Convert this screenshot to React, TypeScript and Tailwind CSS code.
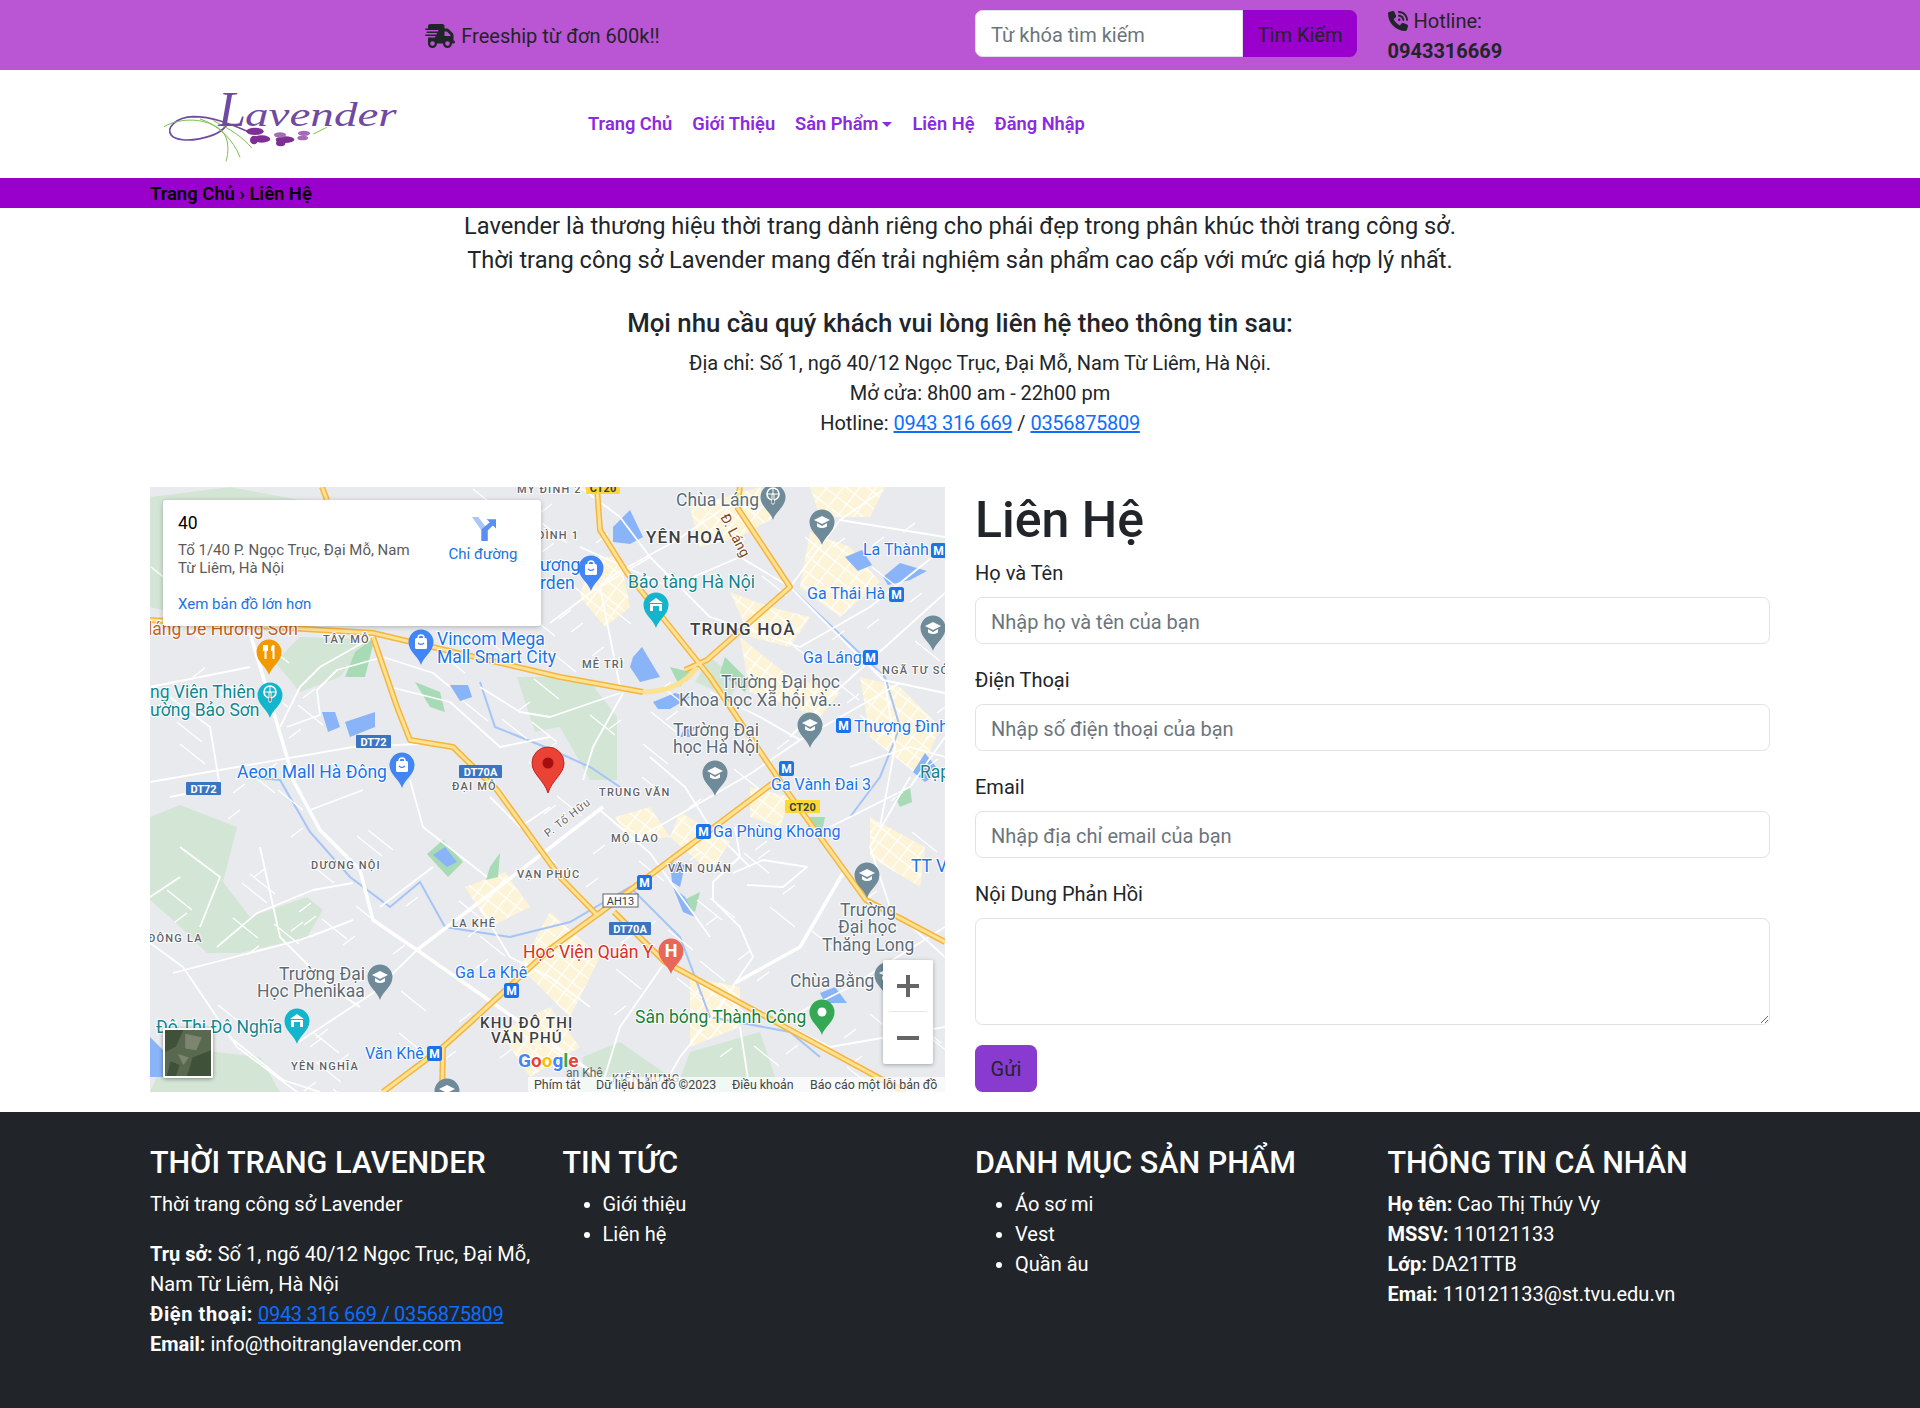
import { FaPhoneVolume, FaTruckFast } from "react-icons/fa6";

const minor = [
  "100,146 137,270 143,293 170,343 210,383 223,433 267,463 343,516 420,570 470,605",
  "137,240 170,228 167,203 187,183 233,170 283,186 300,200",
  "100,180 0,200",
  "0,295 203,260 290,256",
  "160,323 213,303",
  "260,293 273,340 337,390",
  "230,420 283,380",
  "267,463 410,353 453,320",
  "0,410 30,390",
  "160,450 203,433",
  "67,460 107,426 163,403 203,396",
  "0,456 33,480 87,560 147,605",
  "23,486 150,453 203,433",
  "147,556 223,506 267,463",
  "80,550 133,593 170,605",
  "585,496 650,460 693,386",
  "563,413 590,440 603,470 585,496 570,520 530,570 510,605",
  "563,413 563,395 590,370 585,340",
  "597,398 633,400 657,380 613,373 583,386",
  "450,323 500,366 560,450",
  "400,136 467,86 527,53 590,10",
  "640,100 690,33 733,3",
  "640,100 733,193 795,206",
  "750,196 650,253 600,287 520,333 480,355",
  "795,106 683,207 640,250",
  "473,206 443,260 433,293",
  "430,0 470,30 500,70 560,130",
  "500,70 450,100 470,200",
  "560,130 650,160 720,120 795,60",
  "690,33 795,50",
  "760,290 720,360 740,420 795,470",
  "680,340 760,300 795,250",
  "640,530 700,500 795,440",
  "515,475 470,540 450,605",
  "600,520 680,560 795,540",
  "330,200 370,225 400,230 470,206",
  "20,210 60,240 70,300 20,310",
  "240,200 300,215 350,260 400,250",
  "340,310 370,340 400,320",
  "110,360 130,450 180,500 210,520",
  "30,360 70,390 50,440",
  "330,420 360,470 400,490 440,520",
  "223,150 170,180 150,200 130,240",
  "560,205 610,230 650,253",
  "500,270 535,300 560,340 600,380",
  "430,60 520,100 590,70 640,100",
  "700,280 760,260 795,270",
  "735,195 745,260 730,340",
  "590,540 600,605",
];

// short side streets, scattered with a fixed seed so the picture never changes
const sideStreets = Array.from({ length: 170 }, (_, i) => {
  const x = (i * 137 + (i * i * 11) % 97) % 795;
  const y = (i * 211 + (i * i * 7) % 89) % 605;
  const len = 12 + (i * 13) % 26;
  const up = i % 2 === 0 ? -0.75 : 0.8;
  return { x, y, x2: x + len, y2: y + len * up };
});

const greens = [
  "0,330 30,318 87,340 73,395 100,430 157,410 173,423 157,450 90,466 57,466 23,433 0,413",
  "0,10 80,0 160,15 180,60 120,110 40,130 0,120",
  "400,193 440,195 467,230 467,293 440,293 410,240",
  "125,175 150,150 220,152 190,190 150,205",
  "367,190 410,190 410,240 385,245",
  "433,570 470,555 520,590 510,605 430,605",
  "540,565 610,545 630,605 525,605",
  "20,560 110,570 130,605 0,605",
  "560,170 590,195 580,210 545,195",
];

const parks = [
  "277,367 293,353 313,375 298,390",
  "340,380 350,366 348,390 336,393",
  "205,165 225,150 215,190 195,190",
  "265,195 290,205 295,225 280,220",
  "570,186 575,170 600,195 595,205",
  "530,415 550,405 545,425 532,420",
  "745,310 760,300 762,315 750,320",
  "660,330 675,330 672,345 658,340",
  "520,180 540,185 530,200",
];

const waters = [
  "463,40 480,23 493,50 480,57 463,55",
  "733,90 750,76 777,84 760,93 738,98",
  "695,70 712,63 722,78 708,84",
  "483,170 492,160 510,190 490,195 480,180",
  "503,215 525,206 540,210 520,222 508,222",
  "535,240 545,240 540,250 530,250",
  "763,285 775,266 790,285 775,295",
  "523,400 535,410 545,430 533,425",
  "520,375 535,378 530,400 522,395",
  "172,225 185,225 190,240 178,245",
  "195,235 225,225 225,240 200,250",
  "300,198 318,198 322,210 310,214",
  "0,550 15,565 20,590 0,590",
  "283,368 295,360 307,375 297,380",
  "670,506 685,500 697,516 675,516",
];

const city = [
  "540,20 610,0 625,30 590,50 550,60",
  "660,45 700,60 730,95 690,130 650,100",
  "580,105 620,120 660,130 640,160 600,150",
  "440,70 470,70 480,120 455,140 430,110",
  "590,150 640,190 690,205 670,230 600,205",
  "710,190 750,200 790,240 770,290 720,250",
  "660,0 735,0 720,30 670,30",
  "530,325 580,355 560,385 520,350",
  "400,425 450,470 420,530 370,480",
  "350,545 400,520 430,560 380,590",
  "540,490 590,500 590,540 540,560",
  "315,400 355,385 380,420 340,440",
  "600,300 640,310 630,340 600,330",
  "720,330 775,360 770,400 720,370",
  "465,330 500,320 520,350 480,355",
];

const highways = [
  "0,133 223,146 410,190 493,205",
  "172,0 177,13",
  "447,0 450,43 477,86 560,190 636,303 716,413 795,455",
  "587,20 640,100 557,173 535,183",
  "623,296 451,425 400,462 323,533 293,560 233,605",
  "223,150 247,220 260,253 303,260 347,303 410,390 447,428",
  "464,425 515,475 755,605",
  "293,560 292,605",
  "590,0 587,20",
];

type Label = [string, number, number, string, number?];

const labels: Label[] = [
  ["láng De Hương Sơn", -2, 148, "#c5611a"],
  ["Vincom Mega", 287, 158, "#1a73e8"],
  ["Mall Smart City", 287, 176, "#1a73e8"],
  ["ng Viên Thiên", 0, 211, "#12858f"],
  ["ường Bảo Sơn", 0, 229, "#12858f"],
  ["Aeon Mall Hà Đông", 87, 291, "#1a73e8"],
  ["Chùa Láng", 526, 19, "#5b6b78"],
  ["Bảo tàng Hà Nội", 478, 101, "#12858f"],
  ["ương", 390, 84, "#1a73e8"],
  ["rden", 390, 102, "#1a73e8"],
  ["La Thành", 713, 68, "#1a73e8", 16],
  ["Ga Thái Hà", 657, 112, "#1a73e8", 16],
  ["Ga Láng", 653, 176, "#1a73e8", 16],
  ["Trường Đại học", 571, 201, "#5b6b78"],
  ["Khoa học Xã hội và...", 529, 219, "#5b6b78"],
  ["Thượng Đình", 704, 245, "#1a73e8", 16.5],
  ["Trường Đại", 523, 249, "#5b6b78"],
  ["học Hà Nội", 523, 266, "#5b6b78"],
  ["Ga Vành Đai 3", 621, 303, "#1a73e8", 16],
  ["Rạp", 770, 291, "#12858f"],
  ["Ga Phùng Khoang", 563, 350, "#1a73e8", 16],
  ["Học Viện Quân Y", 373, 471, "#d93025"],
  ["Ga La Khê", 305, 491, "#1a73e8", 16],
  ["Trường Đại", 129, 493, "#5b6b78"],
  ["Học Phenikaa", 107, 510, "#5b6b78"],
  ["Đô Thị Đô Nghĩa", 6, 546, "#12858f"],
  ["Văn Khê", 215, 572, "#1a73e8", 16],
  ["Sân bóng Thành Công", 485, 536, "#188038"],
  ["Chùa Bằng", 640, 500, "#5b6b78"],
  ["Trường", 690, 429, "#5b6b78"],
  ["Đại học", 688, 446, "#5b6b78"],
  ["Thăng Long", 672, 464, "#5b6b78"],
  ["TT V", 761, 385, "#1a73e8"],
];

const areas: Label[] = [
  ["TÂY MỖ", 173, 156, "#5f6368", 11],
  ["ĐẠI MỖ", 302, 303, "#5f6368", 11],
  ["MỸ ĐÌNH 2", 367, 6, "#5f6368", 11],
  ["ĐÌNH 1", 387, 52, "#5f6368", 11],
  ["YÊN HOÀ", 496, 56, "#3c4043", 17],
  ["TRUNG HOÀ", 540, 148, "#3c4043", 17],
  ["NGÃ TƯ SỞ", 732, 187, "#5f6368", 11],
  ["MỄ TRÌ", 432, 181, "#5f6368", 11],
  ["TRUNG VĂN", 449, 309, "#5f6368", 11],
  ["MỘ LAO", 461, 355, "#5f6368", 11],
  ["VĂN QUÁN", 518, 385, "#5f6368", 11],
  ["VẠN PHÚC", 367, 391, "#5f6368", 11],
  ["LA KHÊ", 302, 440, "#5f6368", 11],
  ["DƯƠNG NỘI", 161, 382, "#5f6368", 11],
  ["ĐÔNG LA", -2, 455, "#5f6368", 11],
  ["YÊN NGHĨA", 141, 583, "#5f6368", 11],
  ["KHU ĐÔ THỊ", 330, 541, "#3c4043", 15],
  ["VĂN PHÚ", 341, 556, "#3c4043", 15],
  ["KIẾN HƯNG", 462, 595, "#5f6368", 11],
];

const pins: [number, number, string, string][] = [
  [441, 81, "#4285f4", "bag"],
  [271, 155, "#4285f4", "bag"],
  [252, 278, "#4285f4", "bag"],
  [119, 165, "#f29900", "food"],
  [120, 208, "#12b5cb", "tree"],
  [506, 118, "#12b5cb", "museum"],
  [147, 534, "#12b5cb", "museum"],
  [623, 10, "#6f8a99", "tree"],
  [672, 35, "#6f8a99", "cap"],
  [783, 141, "#6f8a99", "cap"],
  [660, 238, "#6f8a99", "cap"],
  [565, 286, "#6f8a99", "cap"],
  [717, 388, "#6f8a99", "cap"],
  [230, 490, "#6f8a99", "cap"],
  [297, 604, "#6f8a99", "cap"],
  [737, 488, "#6f8a99", "cap"],
  [521, 464, "#e8665a", "h"],
  [672, 525, "#34a853", "dot"],
];

const metro: [number, number][] = [
  [781, 56], [739, 100], [713, 163], [686, 231], [629, 274], [546, 337], [487, 388], [354, 496], [277, 559],
];

const badges: [string, number, number, number, string, string][] = [
  ["DT72", 206, 248, 35, "#3a75c4", "#fff"],
  ["DT70A", 309, 278, 43, "#3a75c4", "#fff"],
  ["DT72", 36, 295, 35, "#3a75c4", "#fff"],
  ["CT20", 635, 313, 35, "#fdd835", "#3c4043"],
  ["CT20", 436, -6, 34, "#fdd835", "#3c4043"],
  ["DT70A", 459, 435, 42, "#3a75c4", "#fff"],
];

const Pin = ({ x, y, fill, kind }: { x: number; y: number; fill: string; kind: string }) => (
  <g transform={`translate(${x} ${y})`}>
    <path d="M0 23C-2 15-12.5 10-12.5 0a12.5 12.5 0 0 1 25 0C12.5 10 2 15 0 23z" fill={fill} />
    {kind === "cap" && (
      <>
        <path d="M-8-2 0-6 8-2 0 2z" fill="#fff" />
        <path d="M-5 1v3.500q5 3 10 0V1L0 4z" fill="#fff" />
      </>
    )}
    {kind === "bag" && (
      <>
        <rect x="-6" y="-4" width="12" height="11" rx="1.500" fill="#fff" />
        <path d="M-3-4a3 3 0 0 1 6 0" fill="none" stroke="#fff" strokeWidth="1.500" />
        <path d="M-3 1q3 3 6 0" fill="none" stroke={fill} strokeWidth="1.200" />
      </>
    )}
    {kind === "food" && (
      <path d="M-6-7v6h1.500V7h2V-1H-1V-7M4-7C2-7 2-3 2-1h1.500V7h2V-7z" fill="#fff" />
    )}
    {kind === "tree" && (
      <>
        <circle cy="-3" r="6" fill="none" stroke="#fff" strokeWidth="1.600" />
        <path d="M-1-3H1V7H-1zM-6-3H6M0-9V3" stroke="#fff" strokeWidth="1" />
      </>
    )}
    {kind === "museum" && <path d="M-7-2 0-7 7-2zM-6-1H6V6H-6z" fill="#fff" />}
    {kind === "museum" && <rect x="-3" y="1" width="6" height="5" fill={fill} />}
    {kind === "h" && (
      <text textAnchor="middle" y="6" fontSize="18" fontWeight="700" fill="#fff">
        H
      </text>
    )}
    {kind === "dot" && <circle r="4.500" fill="#fff" />}
  </g>
);

const GoogleMap = () => (
  <div className="relative h-[605px] overflow-hidden bg-[#e8eaed]">
    <svg viewBox="0 0 795 605" className="block h-full w-full" style={{ fontFamily: "Roboto, sans-serif" }}>
      <defs>
        <pattern id="blocks" width="13" height="13" patternUnits="userSpaceOnUse" patternTransform="rotate(38)">
          <rect width="13" height="13" fill="#fdf3d6" />
          <path d="M0 0H13M0 0V13" stroke="#fff" strokeWidth="2.500" />
        </pattern>
      </defs>
      {greens.map((p) => (
        <polygon key={p} points={p} fill="#d3e6d6" />
      ))}
      {city.map((p) => (
        <polygon key={p} points={p} fill="url(#blocks)" />
      ))}
      {parks.map((p) => (
        <polygon key={p} points={p} fill="#a8dab5" />
      ))}
      {waters.map((p) => (
        <polygon key={p} points={p} fill="#8ab4f8" />
      ))}
      <polyline points="100,290 130,293 160,345 200,390 240,420 270,395 295,440 360,450 420,435 480,400 530,450 560,530 640,545 670,570" fill="none" stroke="#a5c4f7" strokeWidth="2" />
      <polyline points="640,100 735,190 750,240 730,290 700,330" fill="none" stroke="#a5c4f7" strokeWidth="2" />
      <polyline points="330,195 345,240 400,262 440,280 470,300" fill="none" stroke="#a5c4f7" strokeWidth="2" />
      {sideStreets.map((s) => (
        <line key={`${s.x}-${s.y}`} x1={s.x} y1={s.y} x2={s.x2} y2={s.y2} stroke="#fff" strokeWidth="1.200" />
      ))}
      {minor.map((p, i) => (
        <polyline key={p} points={p} fill="none" stroke="#fff" strokeWidth={i < 1 || i === 7 || i === 15 ? 3.500 : 1.800} strokeLinejoin="round" />
      ))}
      {highways.map((p) => (
        <polyline key={p} points={p} fill="none" stroke="#f5b53f" strokeWidth="6" strokeLinejoin="round" />
      ))}
      {highways.map((p) => (
        <polyline key={`${p}-in`} points={p} fill="none" stroke="#fde293" strokeWidth="3" strokeLinejoin="round" />
      ))}
      <path d="M493 205Q530 205 547 180" fill="none" stroke="#fde293" strokeWidth="5" />
      {labels.map(([t, x, y, c, s]) => (
        <text key={`${t}${x}`} x={x} y={y} fill={c} fontSize={s ?? 17.5} stroke="#fff" strokeWidth="2" paintOrder="stroke">
          {t}
        </text>
      ))}
      {areas.map(([t, x, y, c, s]) => (
        <text key={`${t}${x}`} x={x} y={y} fill={c} fontSize={s} fontWeight="500" letterSpacing="1.200" stroke="#fff" strokeWidth="2" paintOrder="stroke">
          {t}
        </text>
      ))}
      <text x="555" y="75" fill="#7b4a1e" fontSize="14" transform="rotate(62 600 65)" stroke="#fff" strokeWidth="2" paintOrder="stroke">
        Đ. Láng
      </text>
      <text x="395" y="348" fill="#5f6368" fontSize="11" letterSpacing="1" transform="rotate(-38 400 345)" stroke="#fff" strokeWidth="2" paintOrder="stroke">
        P. Tố Hữu
      </text>
      {badges.map(([t, x, y, w, bg, c]) => (
        <g key={`${t}${x}`}>
          <rect x={x} y={y} width={w} height="13" rx="1" fill={bg} />
          <text x={x + w / 2} y={y + 10.500} textAnchor="middle" fontSize="11" fontWeight="700" fill={c}>
            {t}
          </text>
        </g>
      ))}
      <rect x="453" y="407" width="35" height="13" fill="#fff" stroke="#5f6368" />
      <text x="470.500" y="417.500" textAnchor="middle" fontSize="11" fill="#3c4043">
        AH13
      </text>
      {metro.map(([x, y]) => (
        <g key={`${x}-${y}`}>
          <rect x={x} y={y} width="15" height="15" rx="2.500" fill="#1a73e8" />
          <text x={x + 7.500} y={y + 12} textAnchor="middle" fontSize="12" fontWeight="700" fill="#fff">
            M
          </text>
        </g>
      ))}
      {pins.map(([x, y, f, k]) => (
        <Pin key={`${x}-${y}`} x={x} y={y} fill={f} kind={k} />
      ))}
      <path d="M398 306C394 293 382 287 382 276a16 16 0 0 1 32 0C414 287 402 293 398 306z" fill="#ea4335" stroke="#c5221f" />
      <circle cx="398" cy="276" r="5.500" fill="#a50e0e" />
      <text x="416" y="590" fill="#5f6368" fontSize="12">
        ạn Khê
      </text>
      <text x="368" y="580" fontSize="19" fontWeight="700" stroke="#fff" strokeWidth="2" paintOrder="stroke">
        <tspan fill="#4285f4">G</tspan>
        <tspan fill="#ea4335">o</tspan>
        <tspan fill="#fbbc05">o</tspan>
        <tspan fill="#4285f4">g</tspan>
        <tspan fill="#34a853">l</tspan>
        <tspan fill="#ea4335">e</tspan>
      </text>
      <rect x="378" y="590" width="417" height="15" fill="#fff" fillOpacity="0.7" />
      <g fontSize="12.400" fill="#444">
        <text x="384" y="601.500">Phím tắt</text>
        <text x="446" y="601.500">Dữ liệu bản đồ ©2023</text>
        <text x="582" y="601.500">Điều khoản</text>
        <text x="660" y="601.500">Báo cáo một lỗi bản đồ</text>
      </g>
    </svg>

    <div className="absolute left-[13px] top-[13px] h-[126px] w-[378px] rounded-[3px] bg-white font-['Roboto',sans-serif] shadow-[0_1px_5px_rgba(0,0,0,0.25)]">
      <div className="absolute left-[15px] top-[11px] text-[17.5px] leading-[24px] text-black">40</div>
      <div className="absolute left-[15px] top-[41px] w-[245px] text-[15px] leading-[18px] text-[#5b5b5b]">
        Tổ 1/40 P. Ngọc Trục, Đại Mỗ, Nam Từ Liêm, Hà Nội
      </div>
      <div className="absolute left-[15px] top-[95px] text-[15px] leading-[18px] text-[#1a73e8]">Xem bản đồ lớn hơn</div>
      <div className="absolute left-[285px] top-[16px] flex w-[70px] flex-col items-center">
        <svg viewBox="0 0 24 24" className="h-[25px] w-[25px]">
          <path d="M1 1h6l9 12v11h-6V14z" fill="#a9c7fa" />
          <path d="M10 24V13l8-7-3-3h9v9l-3-3-5 5v10z" fill="#5a8ff0" />
        </svg>
        <span className="mt-[4px] whitespace-nowrap text-[15px] leading-[18px] text-[#1a73e8]">Chỉ đường</span>
      </div>
    </div>

    <div className="absolute left-[13px] top-[541px] h-[50px] w-[50px] overflow-hidden rounded-[2px] border-2 border-white shadow-[0_1px_4px_rgba(0,0,0,0.4)]">
      <svg viewBox="0 0 50 50" className="block h-full w-full">
        <rect width="50" height="50" fill="#59694f" />
        <path d="M0 0h20L12 18 0 24zM30 30l20-8v28H24zM6 34l10 4-4 12H2z" fill="#3f5239" />
        <path d="M22 4l18 4-6 14-12-2zM14 26l12 4-6 8z" fill="#7d8471" />
      </svg>
    </div>

    <div className="absolute left-[733px] top-[473px] flex h-[104px] w-[50px] flex-col items-center rounded-[2px] bg-white px-[6px] shadow-[0_1px_4px_rgba(0,0,0,0.3)]">
      <div className="flex h-[52px] w-full items-center justify-center border-b border-[#e6e6e6]">
        <svg viewBox="0 0 24 24" className="h-[24px] w-[24px]">
          <path d="M10 1h4v9h9v4h-9v9h-4v-9H1v-4h9z" fill="#666" />
        </svg>
      </div>
      <div className="flex h-[52px] w-full items-center justify-center">
        <svg viewBox="0 0 24 24" className="h-[24px] w-[24px]">
          <path d="M1 10h22v4H1z" fill="#666" />
        </svg>
      </div>
    </div>
  </div>
);

const Logo = () => (
  <svg viewBox="0 0 810 300" className="h-[100px] w-[270px]">
    <path d="M232 150C205 195 90 212 65 185 45 160 80 130 130 128 190 128 240 150 300 175" fill="none" stroke="#6f4aa0" strokeWidth="5" />
    <path d="M42 158C90 130 170 130 215 170 240 195 235 240 228 262M150 135C200 150 250 195 270 250M190 140C240 165 280 190 305 222M490 180 530 160" fill="none" stroke="#7cc04b" strokeWidth="3" />
    <g fill="#7d2f93">
      <ellipse cx="315" cy="172" rx="26" ry="11" />
      <ellipse cx="335" cy="195" rx="26" ry="11" />
      <ellipse cx="312" cy="198" rx="12" ry="13" />
      <ellipse cx="405" cy="197" rx="28" ry="10" />
      <ellipse cx="392" cy="207" rx="14" ry="10" />
    </g>
    <g fill="#a56bb5">
      <ellipse cx="390" cy="183" rx="18" ry="8" />
      <ellipse cx="462" cy="178" rx="18" ry="8" />
      <ellipse cx="458" cy="192" rx="16" ry="7" />
    </g>
    <text y="155" fontFamily="Liberation Serif, serif" fontStyle="italic" fill="#6f4aa0">
      <tspan x="205" fontSize="150">
        L
      </tspan>
      <tspan x="285" fontSize="100" textLength="455" lengthAdjust="spacingAndGlyphs">
        avender
      </tspan>
    </text>
  </svg>
);

const Field = ({ label, placeholder }: { label: string; placeholder: string }) => (
  <div className="mb-[20px]">
    <label className="mb-[10px] block h-[30px] pt-[1px]">{label}</label>
    <input
      placeholder={placeholder}
      className="block h-[47px] w-full rounded-[7.5px] border border-[#dee2e6] bg-white px-[15px] pt-[2px] placeholder:text-[#6c757d]"
    />
  </div>
);

const navLinks = ["Trang Chủ", "Giới Thiệu", "Sản Phẩm", "Liên Hệ", "Đăng Nhập"];

export default function App() {
  return (
    <div className="min-h-[1408px] bg-white font-['Roboto',sans-serif] text-[20px] leading-[30px] text-[#212529]">
      <div className="h-[70px] bg-[#ba55d3]">
        <div className="mx-auto grid h-full w-[1650px] grid-cols-2 gap-[30px] px-[15px]">
          <div className="flex items-center justify-center gap-[6px] pr-[10px] pt-[2px]">
            <FaTruckFast className="text-[30px]" />
            <span>Freeship từ đơn 600k!!</span>
          </div>
          <div className="grid grid-cols-2 gap-[30px]">
            <div className="flex h-full items-start pt-[10px]">
              <input
                placeholder="Từ khóa tìm kiếm"
                className="h-[47px] w-[268px] rounded-l-[7.5px] border border-[#dee2e6] bg-white px-[15px] pt-[2px] placeholder:text-[#6c757d]"
              />
              <button className="h-[47px] w-[114px] rounded-r-[7.5px] bg-[#9900cc] pt-[2px] text-[#212529]">Tìm Kiếm</button>
            </div>
            <div className="pt-[6px]">
              <div className="flex items-center gap-[6px]">
                <FaPhoneVolume className="text-[20px]" />
                <span>Hotline:</span>
              </div>
              <div className="font-bold">0943316669</div>
            </div>
          </div>
        </div>
      </div>

      <nav className="mx-auto flex h-[108px] w-[1650px] items-center px-[15px]">
        <div className="w-[438px]">
          <Logo />
        </div>
        <ul className="flex items-center gap-[20px] text-[18.3px] font-semibold text-[#8a2be2]">
          {navLinks.map((item) => (
            <li key={item} className="flex items-center">
              {item}
              {item === "Sản Phẩm" && (
                <span className="ml-[4px] h-0 w-0 border-x-[5px] border-t-[5px] border-x-transparent border-t-[#8a2be2]" />
              )}
            </li>
          ))}
        </ul>
      </nav>

      <div className="h-[30px] bg-[#9900cc]">
        <div className="mx-auto w-[1650px] px-[15px] pt-[1px] text-[18.4px] font-semibold text-black">Trang Chủ › Liên Hệ</div>
      </div>

      <main className="mx-auto w-[1650px] px-[15px]">
        <div className="pt-[1px] text-center">
          <p className="text-[23.6px] leading-[34px]">Lavender là thương hiệu thời trang dành riêng cho phái đẹp trong phân khúc thời trang công sở.</p>
          <p className="text-[23.6px] leading-[34px]">Thời trang công sở Lavender mang đến trải nghiệm sản phẩm cao cấp với mức giá hợp lý nhất.</p>
          <h5 className="mb-[10px] mt-[31px] text-[25.8px] font-medium">Mọi nhu cầu quý khách vui lòng liên hệ theo thông tin sau:</h5>
          <ul className="pl-[40px]">
            <li>Địa chỉ: Số 1, ngõ 40/12 Ngọc Trục, Đại Mỗ, Nam Từ Liêm, Hà Nội.</li>
            <li>Mở cửa: 8h00 am - 22h00 pm</li>
            <li>
              Hotline: <a className="tracking-[-0.3px] text-[#0d6efd] underline">0943 316 669</a> / <a className="tracking-[-0.3px] text-[#0d6efd] underline">0356875809</a>
            </li>
          </ul>
        </div>

        <div className="mt-[49px] grid grid-cols-2 gap-[30px] pb-[20px]">
          <GoogleMap />
          <form>
            <h1 className="mb-[10px] h-[60px] pt-[3px] text-[50px] font-medium leading-[60px]">Liên Hệ</h1>
            <Field label="Họ và Tên" placeholder="Nhập họ và tên của bạn" />
            <Field label="Điện Thoại" placeholder="Nhập số điện thoại của bạn" />
            <Field label="Email" placeholder="Nhập địa chỉ email của bạn" />
            <div className="mb-[20px]">
              <label className="mb-[10px] block h-[30px] pt-[1px]">Nội Dung Phản Hồi</label>
              <textarea className="block h-[107px] w-full rounded-[7.5px] border border-[#dee2e6] bg-white px-[15px]" />
            </div>
            <button type="button" className="h-[47px] w-[62px] rounded-[7.5px] bg-[#8a3bcf] text-[#212529]">
              Gửi
            </button>
          </form>
        </div>
      </main>

      <footer className="h-[296px] bg-[#212529] pt-[31px] text-white">
        <div className="mx-auto grid w-[1650px] grid-cols-4 gap-[30px] px-[15px]">
          <div>
            <h4 className="mb-[10px] h-[36px] pt-[2px] text-[30.5px] font-medium leading-[36px]">THỜI TRANG LAVENDER</h4>
            <p className="mb-[20px]">Thời trang công sở Lavender</p>
            <p>
              <b>Trụ sở:</b> Số 1, ngõ 40/12 Ngọc Trục, Đại Mỗ, Nam Từ Liêm, Hà Nội
            </p>
            <p>
              <b className="tracking-[0.6px]">Điện thoại:</b> <a className="tracking-[-0.3px] text-[#0d6efd] underline">0943 316 669 / 0356875809</a>
            </p>
            <p>
              <b>Email:</b> info@thoitranglavender.com
            </p>
          </div>
          <div>
            <h4 className="mb-[10px] h-[36px] pt-[2px] text-[30.5px] font-medium leading-[36px]">TIN TỨC</h4>
            <ul className="list-disc pl-[40px]">
              <li>Giới thiệu</li>
              <li>Liên hệ</li>
            </ul>
          </div>
          <div>
            <h4 className="mb-[10px] h-[36px] pt-[2px] text-[30.5px] font-medium leading-[36px]">DANH MỤC SẢN PHẨM</h4>
            <ul className="list-disc pl-[40px]">
              <li>Áo sơ mi</li>
              <li>Vest</li>
              <li>Quần âu</li>
            </ul>
          </div>
          <div>
            <h4 className="mb-[10px] h-[36px] pt-[2px] text-[30.5px] font-medium leading-[36px]">THÔNG TIN CÁ NHÂN</h4>
            <p>
              <b>Họ tên:</b> Cao Thị Thúy Vy
            </p>
            <p>
              <b>MSSV:</b> 110121133
            </p>
            <p>
              <b>Lớp:</b> DA21TTB
            </p>
            <p>
              <b>Emai:</b> 110121133@st.tvu.edu.vn
            </p>
          </div>
        </div>
      </footer>
    </div>
  );
}
